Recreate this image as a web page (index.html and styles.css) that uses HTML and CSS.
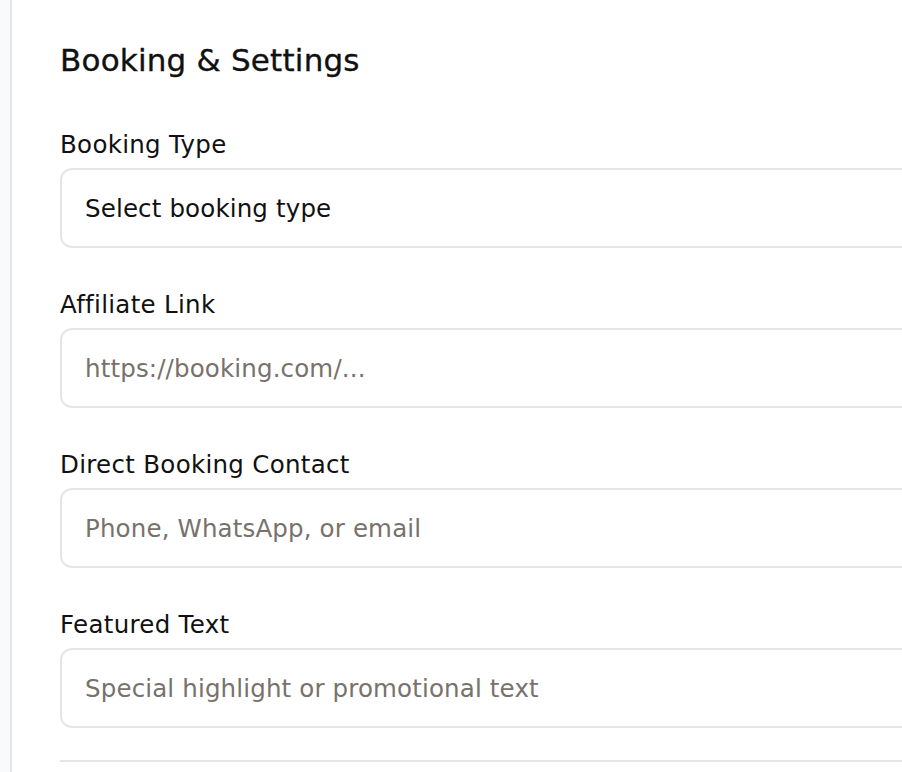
FILE: index.html
```html
<!DOCTYPE html>
<html lang="en">
<head>
<meta charset="utf-8">
<title>Booking &amp; Settings</title>
<link rel="stylesheet" href="styles.css">
</head>
<body>
<div class="page">
  <section class="card">
    <h2 class="card-title">Booking &amp; Settings</h2>
    <div class="fields">
      <div class="field">
        <label class="field-label" for="bookingType">Booking Type</label>
        <select class="control" id="bookingType">
          <option>Select booking type</option>
        </select>
      </div>
      <div class="field">
        <label class="field-label" for="affiliate">Affiliate Link</label>
        <input class="control" id="affiliate" type="text" placeholder="https://booking.com/...">
      </div>
      <div class="field">
        <label class="field-label" for="contact">Direct Booking Contact</label>
        <input class="control" id="contact" type="text" placeholder="Phone, WhatsApp, or email">
      </div>
      <div class="field">
        <label class="field-label" for="featured">Featured Text</label>
        <input class="control" id="featured" type="text" placeholder="Special highlight or promotional text">
      </div>
    </div>
    <div class="divider"></div>
  </section>
</div>
</body>
</html>
```

FILE: styles.css
```css
html, body {
  margin: 0;
  padding: 0;
}

body {
  background: #f9fafb;
  font-family: "DejaVu Sans", "Liberation Sans", sans-serif;
  color: #111111;
  overflow: hidden;
  height: 772px;
}

.page {
  padding-left: 10px;
}

.card {
  width: 1200px;
  min-height: 772px;
  box-sizing: border-box;
  background: #ffffff;
  border-left: 2px solid #e5e5e5;
  padding: 40px 48px 0 48px;
}

.card-title {
  margin: 0 0 48px 0;
  font-size: 31px;
  line-height: 40px;
  font-weight: normal;
  letter-spacing: 0.2px;
  -webkit-text-stroke: 0.35px #111111;
  color: #111111;
}

.fields {
  display: flex;
  flex-direction: column;
  gap: 40px;
}

.field {
  display: flex;
  flex-direction: column;
}

.field-label {
  font-size: 24.5px;
  line-height: 34px;
  margin-bottom: 6px;
  letter-spacing: 0.3px;
  color: #111111;
}

.control {
  display: block;
  box-sizing: border-box;
  width: 100%;
  height: 80px;
  margin: 0;
  padding: 0 23px;
  border: 2px solid #e5e5e5;
  border-radius: 12px;
  background: #ffffff;
  font-family: inherit;
  font-size: 24.5px;
  letter-spacing: 0.15px;
  color: #111111;
  outline: none;
  -webkit-appearance: none;
  appearance: none;
}

.control::placeholder {
  color: #78716c;
  opacity: 1;
}

.divider {
  margin-top: 32px;
  border-top: 2px solid #e5e5e5;
}
```
